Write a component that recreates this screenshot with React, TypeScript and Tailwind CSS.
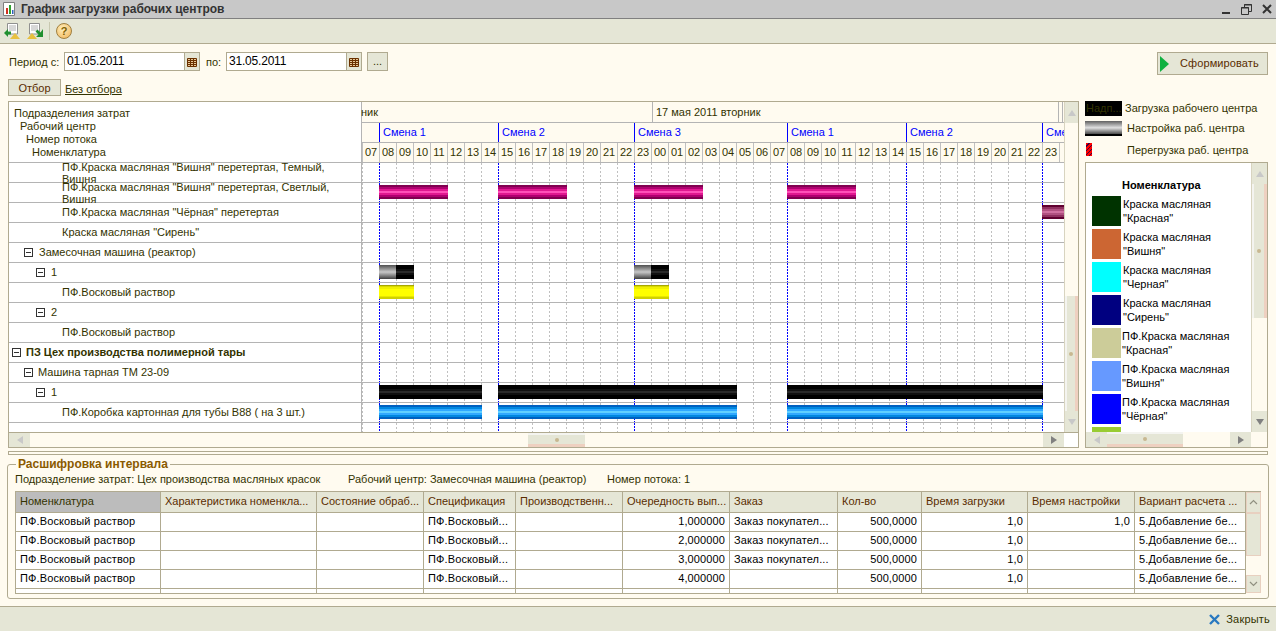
import type { ReactNode } from "react";

const hours = [
  "07", "08", "09", "10", "11", "12", "13", "14", "15", "16", "17", "18", "19", "20", "21", "22", "23",
  "00", "01", "02", "03", "04", "05", "06", "07", "08", "09", "10", "11", "12", "13", "14", "15", "16",
  "17", "18", "19", "20", "21", "22", "23",
];
// индексы часов, где начинается смена
const shiftStarts = [1, 8, 16, 25, 32, 40];

const shifts = [
  { label: "", w: "w-[17px]", blue: false },
  { label: "Смена 1", w: "w-[119px]", blue: true },
  { label: "Смена 2", w: "w-[136px]", blue: true },
  { label: "Смена 3", w: "w-[153px]", blue: true },
  { label: "Смена 1", w: "w-[119px]", blue: true },
  { label: "Смена 2", w: "w-[136px]", blue: true },
  { label: "Смена 3", w: "w-[22px]", blue: true },
];

const pink = "bg-[linear-gradient(to_bottom,#800050_0_2px,#b00070_2px_4px,#e01890_4px_6px,#ff50b8_6px_8px,#e01890_8px_10px,#b00070_10px_12px,#800050_12px_14px)]";
const plum = "bg-[linear-gradient(to_bottom,#600030_0_2px,#903060_2px_4px,#b05080_4px_6px,#d070a0_6px_8px,#b05080_8px_10px,#903060_10px_12px,#600030_12px_14px)]";
const yellow = "bg-[linear-gradient(to_bottom,#a8a800_0_1px,#d8d800_1px_2px,#f0f000_2px_4px,#ffff00_4px_11px,#e8e800_11px_12px,#d0d000_12px_14px)]";
const black = "bg-[linear-gradient(to_bottom,#000_0_4px,#101010_4px_6px,#2a2a2a_6px_8px,#101010_8px_10px,#000_10px_14px)]";
const silver = "bg-[linear-gradient(to_bottom,#505050_0,#c8c8c8_50%,#404040_100%)]";
const blue = "bg-[linear-gradient(to_bottom,#0060c0_0_2px,#0088e0_2px_4px,#30a8ff_4px_6px,#60d0ff_6px_8px,#30a8ff_8px_10px,#0088e0_10px_12px,#0060c0_12px_14px)]";

type Bar = { from: number; to: number; fill: string };

const full = [
  { from: 379, to: 482 },
  { from: 498, to: 737 },
  { from: 787, to: 1043 },
];

type Row = { text: string; pad: string; minus?: string; bold?: boolean; bars?: Bar[]; wrap?: boolean };

const rows: Row[] = [
  { text: 'ПФ.Краска масляная "Вишня" перетертая, Темный, Вишня', pad: "pl-[53px]", wrap: true },
  {
    text: 'ПФ.Краска масляная "Вишня" перетертая, Светлый, Вишня',
    pad: "pl-[53px]",
    wrap: true,
    bars: [
      { from: 379, to: 448, fill: pink },
      { from: 498, to: 567, fill: pink },
      { from: 634, to: 703, fill: pink },
      { from: 787, to: 856, fill: pink },
    ],
  },
  { text: 'ПФ.Краска масляная "Чёрная" перетертая', pad: "pl-[53px]", bars: [{ from: 1042, to: 1064, fill: plum }] },
  { text: 'Краска масляная "Сирень"', pad: "pl-[53px]" },
  { text: "Замесочная машина (реактор)", pad: "pl-[15px]", minus: "mr-[6px]" },
  {
    text: "1",
    pad: "pl-[27px]",
    minus: "mr-[6px]",
    bars: [
      { from: 379, to: 396, fill: silver },
      { from: 396, to: 414, fill: black },
      { from: 634, to: 651, fill: silver },
      { from: 651, to: 669, fill: black },
    ],
  },
  {
    text: "ПФ.Восковый раствор",
    pad: "pl-[53px]",
    bars: [
      { from: 379, to: 414, fill: yellow },
      { from: 634, to: 669, fill: yellow },
    ],
  },
  { text: "2", pad: "pl-[27px]", minus: "mr-[6px]" },
  { text: "ПФ.Восковый раствор", pad: "pl-[53px]" },
  { text: "ПЗ Цех производства полимерной тары", pad: "pl-[3px]", minus: "mr-[5px]", bold: true },
  { text: "Машина тарная ТМ 23-09", pad: "pl-[15px]", minus: "mr-[5px]" },
  { text: "1", pad: "pl-[27px]", minus: "mr-[6px]", bars: full.map((b) => ({ ...b, fill: black })) },
  {
    text: "ПФ.Коробка картонная для тубы В88 ( на 3 шт.)",
    pad: "pl-[53px]",
    bars: full.map((b) => ({ ...b, fill: blue })),
  },
];

const legendItems = [
  { color: "bg-[#003300]", a: "Краска масляная", b: '"Красная"', pad: "pl-[2px]" },
  { color: "bg-[#cc6633]", a: "Краска масляная", b: '"Вишня"', pad: "pl-[2px]" },
  { color: "bg-[#00ffff]", a: "Краска масляная", b: '"Черная"', pad: "pl-[2px]" },
  { color: "bg-[#000080]", a: "Краска масляная", b: '"Сирень"', pad: "pl-[2px]" },
  { color: "bg-[#cccc99]", a: "ПФ.Краска масляная", b: '"Красная"', pad: "pl-[1px]" },
  { color: "bg-[#6699ff]", a: "ПФ.Краска масляная", b: '"Вишня"', pad: "pl-[1px]" },
  { color: "bg-[#0000ff]", a: "ПФ.Краска масляная", b: '"Чёрная"', pad: "pl-[1px]" },
];

const columns = [
  { title: "Номенклатура", w: "w-[145px]" },
  { title: "Характеристика номенкла...", w: "w-[156px]" },
  { title: "Состояние обраб...", w: "w-[107px]" },
  { title: "Спецификация", w: "w-[92px]" },
  { title: "Производственн...", w: "w-[107px]" },
  { title: "Очередность вып...", w: "w-[107px]" },
  { title: "Заказ", w: "w-[108px]" },
  { title: "Кол-во", w: "w-[84px]" },
  { title: "Время загрузки", w: "w-[106px]" },
  { title: "Время настройки", w: "w-[107px]" },
  { title: "Вариант расчета ...", w: "w-[111px]" },
];

const order = "Заказ покупател...";
const tableRows = [
  ["1,000000", order, "1,0"],
  ["2,000000", order, ""],
  ["3,000000", order, ""],
  ["4,000000", "", ""],
];

function Minus({ className }: { className?: string }) {
  return (
    <span className={`relative inline-block h-[9px] w-[9px] shrink-0 border border-[#333] bg-white ${className}`}>
      <span className="absolute left-[1px] top-[3px] h-[1px] w-[5px] bg-[#333]" />
    </span>
  );
}

function Triangle({ dir, dim }: { dir: "up" | "down" | "left" | "right"; dim?: boolean }) {
  const points = {
    up: "4,1 8,7 0,7",
    down: "0,1 8,1 4,7",
    left: "7,0 7,8 1,4",
    right: "1,0 1,8 7,4",
  }[dir];
  return (
    <svg width="8" height="8" viewBox="0 0 8 8">
      <polygon points={points} fill={dim ? "#c8c8c8" : "#808080"} />
    </svg>
  );
}

function ScrollBtn({ dir, dim, className }: { dir: "up" | "down" | "left" | "right"; dim?: boolean; className: string }) {
  return (
    <div className={`flex shrink-0 items-center justify-center bg-[#e5e6d6] ${className}`}>
      <Triangle dir={dir} dim={dim} />
    </div>
  );
}

function VThumb({ className }: { className: string }) {
  return (
    <div className={`flex shrink-0 items-center justify-center border-r-[3px] border-r-[#eed0c0] border-l-[2px] border-l-[#f4f4f0] bg-[#e5e6d6] ${className}`}>
      <span className="h-[4px] w-[4px] rounded-full bg-[#c8b890]" />
    </div>
  );
}

function HThumb({ className }: { className: string }) {
  return (
    <div className={`flex shrink-0 items-center justify-center border-b-[3px] border-b-[#eed0c0] border-t-[2px] border-t-[#f4f4f0] bg-[#e5e6d6] ${className}`}>
      <span className="h-[4px] w-[4px] rounded-full bg-[#c8b890]" />
    </div>
  );
}

function ChartCells() {
  return (
    <div className="flex h-full">
      {hours.map((h, i) => (
        <div key={i} className="h-full w-[17px] shrink-0">
          {shiftStarts.includes(i) ? (
            <div className="h-full w-[1px] bg-[repeating-linear-gradient(to_bottom,#0000ff_0_2px,#ffffff_2px_3px)]" />
          ) : (
            <div className="h-full w-[1px] bg-[repeating-linear-gradient(to_bottom,#c0c0c0_0_2px,#ffffff_2px_4px)]" />
          )}
        </div>
      ))}
    </div>
  );
}

function GanttRow({ row }: { row: Row }) {
  return (
    <div className="flex h-[20px] shrink-0 border-b border-[#b4b4b4]">
      <div className={`flex w-[353px] shrink-0 items-center border-r border-[#b4b4b4] bg-white ${row.pad}`}>
        {row.minus && <Minus className={row.minus} />}
        <span className={row.wrap ? "w-[285px] leading-[12px]" : row.bold ? "font-bold" : ""}>{row.text}</span>
      </div>
      <div className="relative min-w-0 flex-1 overflow-hidden bg-white">
        <ChartCells />
        {row.bars?.map((b, i) => (
          <div key={i} className={`absolute top-[2px] h-[14px] ${b.fill}`} style={{ left: b.from - 362, width: b.to - b.from }} />
        ))}
      </div>
    </div>
  );
}

function Gantt() {
  return (
    <div className="flex h-[347px] w-[1071px] shrink-0 flex-col border border-[#b0aa90]">
      <div className="flex min-h-0 flex-1">
        <div className="flex w-[1055px] shrink-0 flex-col overflow-hidden">
          <div className="flex h-[61px] shrink-0 border-b border-[#b4b4b4]">
            <div className="w-[353px] shrink-0 border-r border-[#b4b4b4] bg-white pt-[5px] text-[11px] leading-[13px]">
              <div className="pl-[5px]">Подразделения затрат</div>
              <div className="pl-[11px]">Рабочий центр</div>
              <div className="pl-[17px]">Номер потока</div>
              <div className="pl-[23px]">Номенклатура</div>
            </div>
            <div className="min-w-0 flex-1">
              <div className="flex h-[21px] border-b border-[#b4b4b4]">
                <div className="-ml-[1px] flex w-[292px] shrink-0 items-center justify-start border-r border-[#b4b4b4]">ник</div>
                <div className="flex w-[406px] shrink-0 items-center border-r border-[#b4b4b4] pl-[3px]">17 мая 2011 вторник</div>
                <div className="w-[4px] shrink-0 border-r border-[#b4b4b4]" />
              </div>
              <div className="flex h-[20px] overflow-hidden border-b border-[#b4b4b4] text-[#0000ff]">
                {shifts.map((s, i) => (
                  <div key={i} className={`flex shrink-0 items-center overflow-hidden whitespace-nowrap pl-[3px] ${s.w} ${s.blue ? "border-l border-[#0000ff]" : ""}`}>
                    {s.label}
                  </div>
                ))}
              </div>
              <div className="flex h-[19px] overflow-hidden">
                {hours.map((h, i) => (
                  <div key={i} className="flex w-[17px] shrink-0 items-center justify-center border-l border-[#c0c0c0]">
                    {h}
                  </div>
                ))}
                <div className="w-[5px] shrink-0 border-l border-[#c0c0c0]" />
              </div>
            </div>
          </div>
          {rows.map((r, i) => (
            <GanttRow key={i} row={r} />
          ))}
          <div className="flex min-h-0 flex-1">
            <div className="w-[353px] shrink-0 border-r border-[#b4b4b4] bg-white" />
            <div className="min-w-0 flex-1 overflow-hidden bg-white">
              <ChartCells />
            </div>
          </div>
        </div>
        <div className="flex w-[14px] shrink-0 flex-col border-l border-[#d8d4c0]">
          <ScrollBtn dir="up" dim className="h-[21px] w-full" />
          <div className="flex-1" />
          <VThumb className="h-[115px] w-full" />
          <ScrollBtn dir="down" dim className="h-[21px] w-full" />
        </div>
      </div>
      <div className="flex h-[15px] shrink-0 border-t border-[#b0aa90]">
        <ScrollBtn dir="left" dim className="h-full w-[21px]" />
        <div className="w-[498px] shrink-0" />
        <HThumb className="h-full w-[57px]" />
        <div className="flex-1" />
        <ScrollBtn dir="right" className="h-full w-[21px]" />
        <div className="h-full w-[14px] shrink-0 bg-white" />
      </div>
    </div>
  );
}

function LegendKey({ swatch, label, gap }: { swatch: ReactNode; label: string; gap: string }) {
  return (
    <div className="flex h-[20px] items-start leading-[15px]">
      <div className="flex w-[37px] shrink-0">{swatch}</div>
      <span className={`whitespace-nowrap ${gap}`}>{label}</span>
    </div>
  );
}

function Legend() {
  return (
    <div className="ml-[6px] flex h-[347px] w-[183px] shrink-0 flex-col">
      <div className="flex h-[61px] shrink-0 flex-col">
        <LegendKey
          gap="pl-[3px]"
          label="Загрузка рабочего центра"
          swatch={<div className="h-[15px] w-[37px] overflow-hidden whitespace-nowrap bg-black pl-[1px] text-[#333300]">Надп...</div>}
        />
        <LegendKey
          gap="pl-[5px]"
          label="Настройка раб. центра"
          swatch={<div className="h-[15px] w-[37px] bg-[linear-gradient(to_bottom,#606060_0,#e0e0e0_45%,#505050_85%,#000_90%)]" />}
        />
        <LegendKey
          gap="pl-[5px] pt-[2px]"
          label="Перегрузка раб. центра"
          swatch={<div className="ml-[1px] mt-[2px] h-[13px] w-[6px] bg-[repeating-linear-gradient(135deg,#ff0000_0_2px,#400040_2px_3px)]" />}
        />
      </div>
      <div className="flex min-h-0 flex-1 flex-col border border-[#b0aa90]">
        <div className="flex min-h-0 flex-1">
          <div className="min-w-0 flex-1 overflow-hidden bg-white text-black">
            <div className="pl-[36px] pt-[16px] font-bold leading-[13px]">Номенклатура</div>
            <div className="mt-[4px] flex flex-col gap-[3px] pl-[6px]">
              {legendItems.map((it) => (
                <div key={it.b + it.a} className="flex h-[30px] items-center">
                  <div className={`h-[30px] w-[29px] shrink-0 ${it.color}`} />
                  <div className={`leading-[14px] ${it.pad}`}>
                    <div>{it.a}</div>
                    <div>{it.b}</div>
                  </div>
                </div>
              ))}
              <div className="h-[30px] w-[29px] shrink-0 bg-[#99cc33]" />
            </div>
          </div>
          <div className="flex w-[16px] shrink-0 flex-col border-l border-[#d8d4c0]">
            <ScrollBtn dir="up" dim className="h-[21px] w-full" />
            <VThumb className="h-[134px] w-full" />
            <div className="flex-1" />
            <ScrollBtn dir="down" className="h-[21px] w-full" />
          </div>
        </div>
        <div className="flex h-[15px] shrink-0">
          <ScrollBtn dir="left" dim className="h-full w-[21px]" />
          <HThumb className="h-full w-[76px]" />
          <div className="flex-1" />
          <ScrollBtn dir="right" className="h-full w-[21px]" />
          <div className="h-full w-[16px] shrink-0" />
        </div>
      </div>
    </div>
  );
}

function DateField({ value }: { value: string }) {
  return (
    <div className="flex h-[19px] w-[136px] border border-[#b0aa90] bg-white">
      <span className="flex-1 pl-[2px] text-[12px] leading-[17px] tracking-[-0.2px] text-black">{value}</span>
      <div className="flex w-[15px] items-center justify-center border-l border-[#b0aa90] bg-[#e5e6d6]">
        <svg width="10" height="10" viewBox="0 0 10 10">
          <path d="M0.5 1.5H9.5V9.5H0.5ZM0.5 3.5H9.5M0.5 5.5H9.5M0.5 7.5H9.5M3.5 1.5V9.5M6.5 1.5V9.5" fill="#e8c898" stroke="#6a3000" strokeWidth="1" />
        </svg>
      </div>
    </div>
  );
}

function TableCell({ w, children, right, last }: { w: string; children?: ReactNode; right?: boolean; last?: boolean }) {
  return (
    <div className={`flex h-full shrink-0 items-center overflow-hidden whitespace-nowrap px-[4px] tracking-[0.12px] ${w} ${right ? "justify-end" : ""} ${last ? "" : "border-r border-[#b0aa90]"}`}>
      {children}
    </div>
  );
}

function DetailTable() {
  return (
    <div className="mx-[7px] mt-[3px] flex h-[103px] border-t border-l border-[#b0aa90]">
      <div className="w-[1230px] shrink-0 overflow-hidden">
        <div className="flex h-[21px] border-b border-[#b0aa90] bg-[#e5e6d6] text-[#5a2d00]">
          {columns.map((c, i) => (
            <div key={c.title} className={`flex h-full shrink-0 items-center overflow-hidden whitespace-nowrap border-r border-[#b0aa90] pl-[4px] ${c.w} ${i === 0 ? "bg-[#bcbcbc] text-[#333300]" : ""}`}>
              {c.title}
            </div>
          ))}
        </div>
        {tableRows.map((r, i) => (
          <div key={i} className="flex h-[19px] border-b border-[#b0aa90] bg-white text-black">
            <TableCell w={columns[0].w}>ПФ.Восковый раствор</TableCell>
            <TableCell w={columns[1].w} />
            <TableCell w={columns[2].w} />
            <TableCell w={columns[3].w}>ПФ.Восковый...</TableCell>
            <TableCell w={columns[4].w} />
            <TableCell w={columns[5].w} right>{r[0]}</TableCell>
            <TableCell w={columns[6].w}>{r[1]}</TableCell>
            <TableCell w={columns[7].w} right>500,0000</TableCell>
            <TableCell w={columns[8].w} right>1,0</TableCell>
            <TableCell w={columns[9].w} right>{r[2]}</TableCell>
            <TableCell w={columns[10].w}>5.Добавление бе...</TableCell>
          </div>
        ))}
        <div className="flex h-[5px] border-b border-[#b0aa90] bg-white">
          {columns.map((c) => (
            <TableCell key={c.title} w={c.w} />
          ))}
        </div>
      </div>
      <div className="flex w-[15px] shrink-0 flex-col">
        <div className="flex h-[21px] items-center justify-center border border-[#e8d0c0] bg-[#e5e6d6] text-[#808080]">
          <svg width="9" height="6" viewBox="0 0 9 6"><path d="M1 5L4.5 1.5L8 5" fill="none" stroke="#909080" strokeWidth="1.2" /></svg>
        </div>
        <div className="h-[43px] border border-[#e8d0c0] bg-[#e5e6d6]" />
        <div className="h-[19px]" />
        <div className="flex h-[18px] items-center justify-center border border-[#e8d0c0] bg-[#e5e6d6]">
          <svg width="9" height="6" viewBox="0 0 9 6"><path d="M1 1L4.5 4.5L8 1" fill="none" stroke="#909080" strokeWidth="1.2" /></svg>
        </div>
      </div>
    </div>
  );
}

export default function App() {
  return (
    <div className="flex h-[631px] w-[1276px] flex-col overflow-hidden bg-[#fffbf0] font-['Liberation_Sans',sans-serif] text-[11px] text-[#333300]">
      {/* заголовок окна */}
      <div className="flex h-[19px] shrink-0 items-center border-b border-[#808080] bg-[#c8c8c8] pl-[3px] pr-[4px]">
        <svg width="12" height="14" viewBox="0 0 12 14">
          <path d="M0.5 0.5H11.5V13.5H0.5Z" fill="#fff" stroke="#808080" />
          <rect x="3" y="6" width="2" height="6" fill="#d03020" />
          <rect x="6" y="3" width="2" height="9" fill="#30a030" />
          <rect x="9" y="8" width="1.5" height="4" fill="#3060c0" />
        </svg>
        <span className="ml-[6px] text-[12px] font-bold text-[#333]">График загрузки рабочих центров</span>
        <div className="ml-auto flex items-center gap-[10px]">
          <svg width="10" height="10" viewBox="0 0 10 10"><rect x="1" y="8" width="8" height="2" fill="#333" /></svg>
          <svg width="11" height="11" viewBox="0 0 11 11"><path d="M3.5 3V0.5H10.5V7.5H8M0.5 3.5H7.5V10.5H0.5Z" fill="none" stroke="#333" /><path d="M3 1H11M0 4H8" stroke="#333" /></svg>
          <svg width="10" height="10" viewBox="0 0 10 10"><path d="M1 1L9 9M9 1L1 9" stroke="#333" strokeWidth="2" /></svg>
        </div>
      </div>

      {/* панель инструментов */}
      <div className="flex h-[25px] shrink-0 items-center border-b border-[#b0aa90] bg-[#e5e6d6] pl-[4px]">
        <svg width="16" height="16" viewBox="0 0 16 16">
          <path d="M3.5 0.5H13.5V11H3.5Z" fill="#fff" stroke="#909090" />
          <path d="M5 3H12M5 5H12M5 7H12" stroke="#b0b0b0" />
          <path d="M0 10L4 6V8.5H7V11.5H4V14Z" fill="#209030" />
          <path d="M6 16L11 10L16 16Z" fill="#e8c040" />
        </svg>
        <svg className="ml-[7px]" width="16" height="16" viewBox="0 0 16 16">
          <path d="M2.5 0.5H12.5V11H2.5Z" fill="#fff" stroke="#909090" />
          <path d="M4 3H11M4 5H11M4 7H11" stroke="#b0b0b0" />
          <path d="M16 6V14H9L11.5 11.5L8.5 8.5L10.5 6.5L13.5 9.5Z" fill="#209030" />
          <path d="M0 16L5 10L10 16Z" fill="#e8c040" />
        </svg>
        <div className="ml-[6px] h-[18px] w-[1px] bg-[#c8c8b0]" />
        <div className="ml-[6px] flex h-[16px] w-[16px] items-center justify-center rounded-full border border-[#a08040] bg-[radial-gradient(circle_at_40%_35%,#fff0c0,#f0b050)] text-[11px] font-bold text-[#806000]">?</div>
      </div>

      {/* период */}
      <div className="flex h-[35px] shrink-0 items-start pt-[8px]">
        <span className="ml-[9px] w-[55px] pt-[2px] text-[#333300]">Период с:</span>
        <DateField value="01.05.2011" />
        <span className="ml-[6px] w-[20px] pt-[2px]">по:</span>
        <DateField value="31.05.2011" />
        <div className="ml-[5px] flex h-[19px] w-[21px] items-center justify-center border border-[#b0aa90] bg-[#e5e6d6]">...</div>
        <div className="ml-auto mr-[8px] flex h-[23px] w-[111px] items-center border border-[#b0aa90] bg-[#e5e6d6] text-[#5a2d00]">
          <svg className="ml-[2px]" width="9" height="16" viewBox="0 0 9 16"><path d="M0 0L9 8L0 16Z" fill="#10b040" /></svg>
          <span className="ml-[11px] text-[11px] tracking-[0.1px]">Сформировать</span>
        </div>
      </div>

      {/* отбор */}
      <div className="flex h-[22px] shrink-0 items-start">
        <div className="ml-[8px] flex h-[17px] w-[53px] items-center justify-center border border-[#b0aa90] bg-[#e5e6d6] pt-[1px] text-[#5a2d00]">Отбор</div>
        <span className="ml-[4px] pt-[2px] underline">Без отбора</span>
      </div>

      <div className="ml-[8px] flex shrink-0">
        <Gantt />
        <Legend />
      </div>

      {/* разделитель */}
      <div className="ml-[8px] mt-[3px] h-[4px] w-[1260px] shrink-0 border border-[#b0aa90]" />

      {/* расшифровка */}
      <fieldset className="mx-[7px] mt-[2px] h-[142px] shrink-0 rounded-[3px] border border-[#b0aa90]">
        <legend className="ml-[8px] px-[2px] text-[12px] font-bold leading-[14px] text-[#8a5a00]">Расшифровка интервала</legend>
        <div className="flex pl-[7px]">
          <span className="w-[333px]">Подразделение затрат: Цех производства масляных красок</span>
          <span className="w-[259px]">Рабочий центр: Замесочная машина (реактор)</span>
          <span>Номер потока: 1</span>
        </div>
        <DetailTable />
      </fieldset>

      {/* подвал */}
      <div className="mt-auto flex h-[25px] shrink-0 items-center justify-end border-t border-[#b0aa90] bg-[#e5e6d6] pr-[6px]">
        <svg width="11" height="11" viewBox="0 0 11 11"><path d="M1 1L10 10M10 1L1 10" stroke="#2878c0" strokeWidth="2.4" /></svg>
        <span className="ml-[6px] tracking-[0.2px]">Закрыть</span>
      </div>
    </div>
  );
}
